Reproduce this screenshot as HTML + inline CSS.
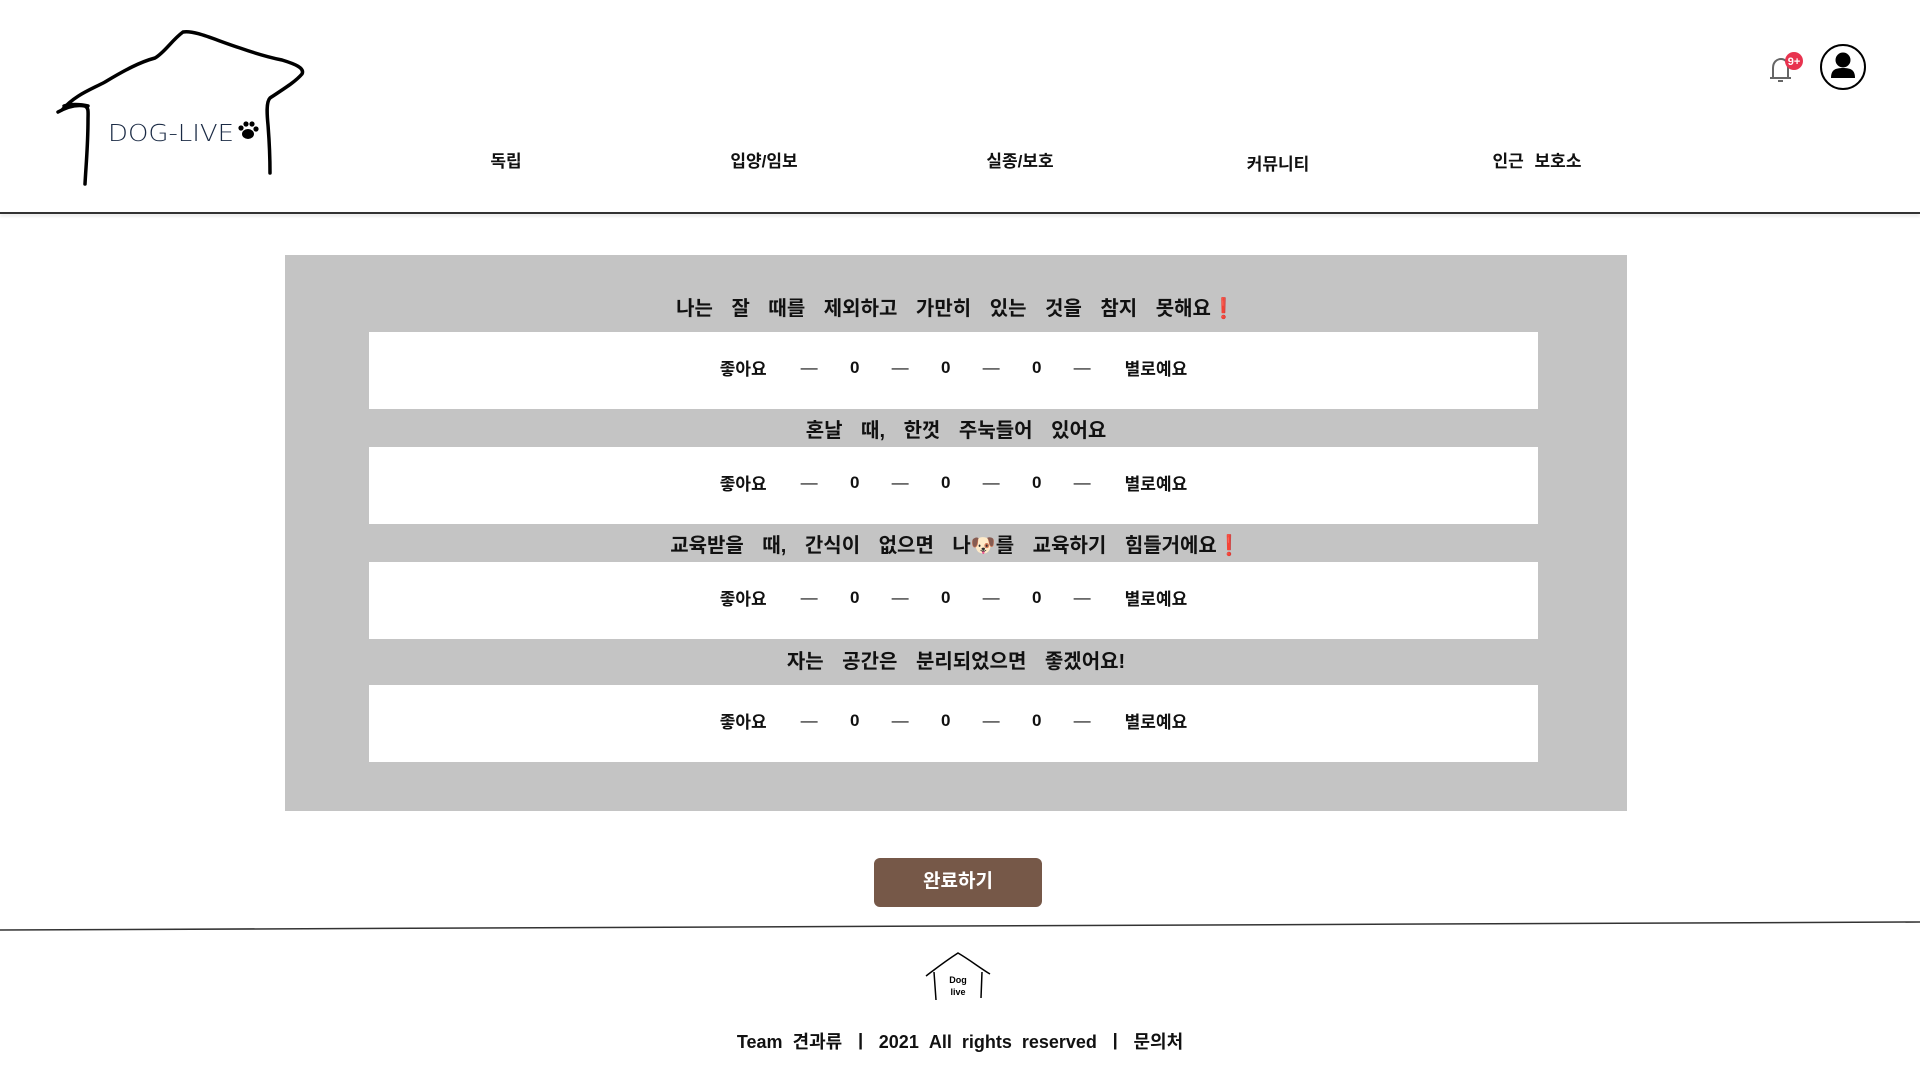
<!DOCTYPE html>
<html><head><meta charset="utf-8"><style>
*{margin:0;padding:0;box-sizing:border-box}
body{width:1920px;height:1080px;background:#fff;position:relative;overflow:hidden;font-family:"Liberation Sans","Noto Sans CJK KR",sans-serif;color:#111}
.abs{position:absolute}
.nav{top:147px;font-size:17px;font-weight:700;transform:translateX(-50%);white-space:nowrap;word-spacing:6px}
.hline{left:0;top:212px;width:1920px;height:2px;background:#333;box-shadow:0 2px 3px #ddd}
.box{left:285px;top:255px;width:1342px;height:556px;background:#c4c4c4}
.title{left:285px;width:1342px;text-align:center;font-size:20px;font-weight:700;word-spacing:13px}
.row{left:369px;width:1169px;height:77px;background:#fff;display:flex;align-items:center;justify-content:center;font-size:17px;font-weight:700;padding-bottom:6px}
.row span{display:inline-block;text-align:center}
.row .d{width:45px;font-weight:400}
.row .n{width:46px}
.btn{left:874px;top:858px;width:168px;height:49px;background:#765848;border-radius:6px;color:#fff;font-size:19px;font-weight:700;text-align:center;line-height:47px}
.foot{left:0;width:1920px;text-align:center;top:1028px;font-size:18px;font-weight:700;word-spacing:5px}
</style></head><body>
<svg class="abs" style="left:0;top:0" width="320" height="200">
<path d="M58,112 C65,108 75,104 85,106 C89,108 88,112 88,120 C88,145 86,165 85,184 M88,106 C80,104 70,104 64,106 M62,110 C75,95 90,90 105,82 C125,70 140,62 155,58 C165,52 172,40 183,32 C195,30 215,40 240,48 C260,55 272,58 282,60 C295,64 305,68 302,74 C295,82 285,88 270,98 C266,102 267,115 268,125 C270,150 270,165 270,173" fill="none" stroke="#000" stroke-width="3.5" stroke-linecap="round" stroke-linejoin="round"/>
<text x="108" y="141" font-family="DejaVu Sans,sans-serif" font-size="23" font-weight="200" fill="#1a2a44" textLength="126" lengthAdjust="spacingAndGlyphs">DOG-LIVE</text>
<g fill="#000"><ellipse cx="248" cy="134" rx="6" ry="5"/><circle cx="241" cy="128" r="2.6"/><circle cx="246" cy="124" r="2.6"/><circle cx="252" cy="124" r="2.6"/><circle cx="256" cy="129" r="2.6"/></g>
</svg>
<div class="abs nav" style="left:506px">독립</div>
<div class="abs nav" style="left:764px">입양/임보</div>
<div class="abs nav" style="left:1020px">실종/보호</div>
<div class="abs nav" style="left:1278px;top:150px">커뮤니티</div>
<div class="abs nav" style="left:1537px">인근 보호소</div>
<svg class="abs" style="left:1765px;top:50px" width="45" height="36">
<path d="M8,28 L8,18 C8,12 12,9 16,9 C20,9 23,12 23,18 L23,28 M5,28 L26,28 M13,31 L18,31" fill="none" stroke="#666" stroke-width="2"/>
<circle cx="29" cy="11" r="9" fill="#e8334f"/><text x="29" y="15" text-anchor="middle" font-size="11" font-weight="700" fill="#fff" font-family="Liberation Sans,sans-serif">9+</text>
</svg>
<svg class="abs" style="left:1819px;top:43px" width="48" height="48">
<circle cx="24" cy="24" r="22" fill="#fff" stroke="#000" stroke-width="2"/>
<circle cx="24" cy="17" r="7.5" fill="#000"/><path d="M12,35 C12,27 16,25 24,25 C32,25 36,27 36,35 Z" fill="#000"/>
</svg>
<div class="abs hline"></div>
<div class="abs box"></div>
<div class="abs title" style="top:292px">나는 잘 때를 제외하고 가만히 있는 것을 참지 못해요<span style="color:#e02020">❗</span></div>
<div class="abs title" style="top:414px">혼날 때, 한껏 주눅들어 있어요</div>
<div class="abs title" style="top:529px">교육받을 때, 간식이 없으면 나🐶를 교육하기 힘들거에요<span style="color:#e02020">❗</span></div>
<div class="abs title" style="top:645px">자는 공간은 분리되었으면 좋겠어요!</div>
<div class="abs row" style="top:332px"><span>좋아요</span><span class="d" style="margin-left:20px">—</span><span class="n">0</span><span class="d">—</span><span class="n">0</span><span class="d">—</span><span class="n">0</span><span class="d">—</span><span style="margin-left:20px">별로예요</span></div>
<div class="abs row" style="top:447px"><span>좋아요</span><span class="d" style="margin-left:20px">—</span><span class="n">0</span><span class="d">—</span><span class="n">0</span><span class="d">—</span><span class="n">0</span><span class="d">—</span><span style="margin-left:20px">별로예요</span></div>
<div class="abs row" style="top:562px"><span>좋아요</span><span class="d" style="margin-left:20px">—</span><span class="n">0</span><span class="d">—</span><span class="n">0</span><span class="d">—</span><span class="n">0</span><span class="d">—</span><span style="margin-left:20px">별로예요</span></div>
<div class="abs row" style="top:685px"><span>좋아요</span><span class="d" style="margin-left:20px">—</span><span class="n">0</span><span class="d">—</span><span class="n">0</span><span class="d">—</span><span class="n">0</span><span class="d">—</span><span style="margin-left:20px">별로예요</span></div>
<div class="abs btn">완료하기</div>
<svg class="abs" style="left:0;top:918px" width="1920" height="14"><line x1="0" y1="12" x2="1920" y2="4" stroke="#333" stroke-width="1.5"/></svg>
<svg class="abs" style="left:922px;top:950px" width="72" height="52">
<path d="M4,26 C12,20 22,12 36,3 C48,10 58,18 68,24 M12,22 L14,50 M60,22 L59,48" fill="none" stroke="#000" stroke-width="1.5"/>
<text x="36" y="33" text-anchor="middle" font-size="9" font-weight="700" font-family="Liberation Sans,sans-serif">Dog</text>
<text x="36" y="45" text-anchor="middle" font-size="9" font-weight="700" font-family="Liberation Sans,sans-serif">live</text>
</svg>
<div class="abs foot">Team 견과류 ㅣ 2021 All rights reserved ㅣ 문의처</div>
</body></html>
